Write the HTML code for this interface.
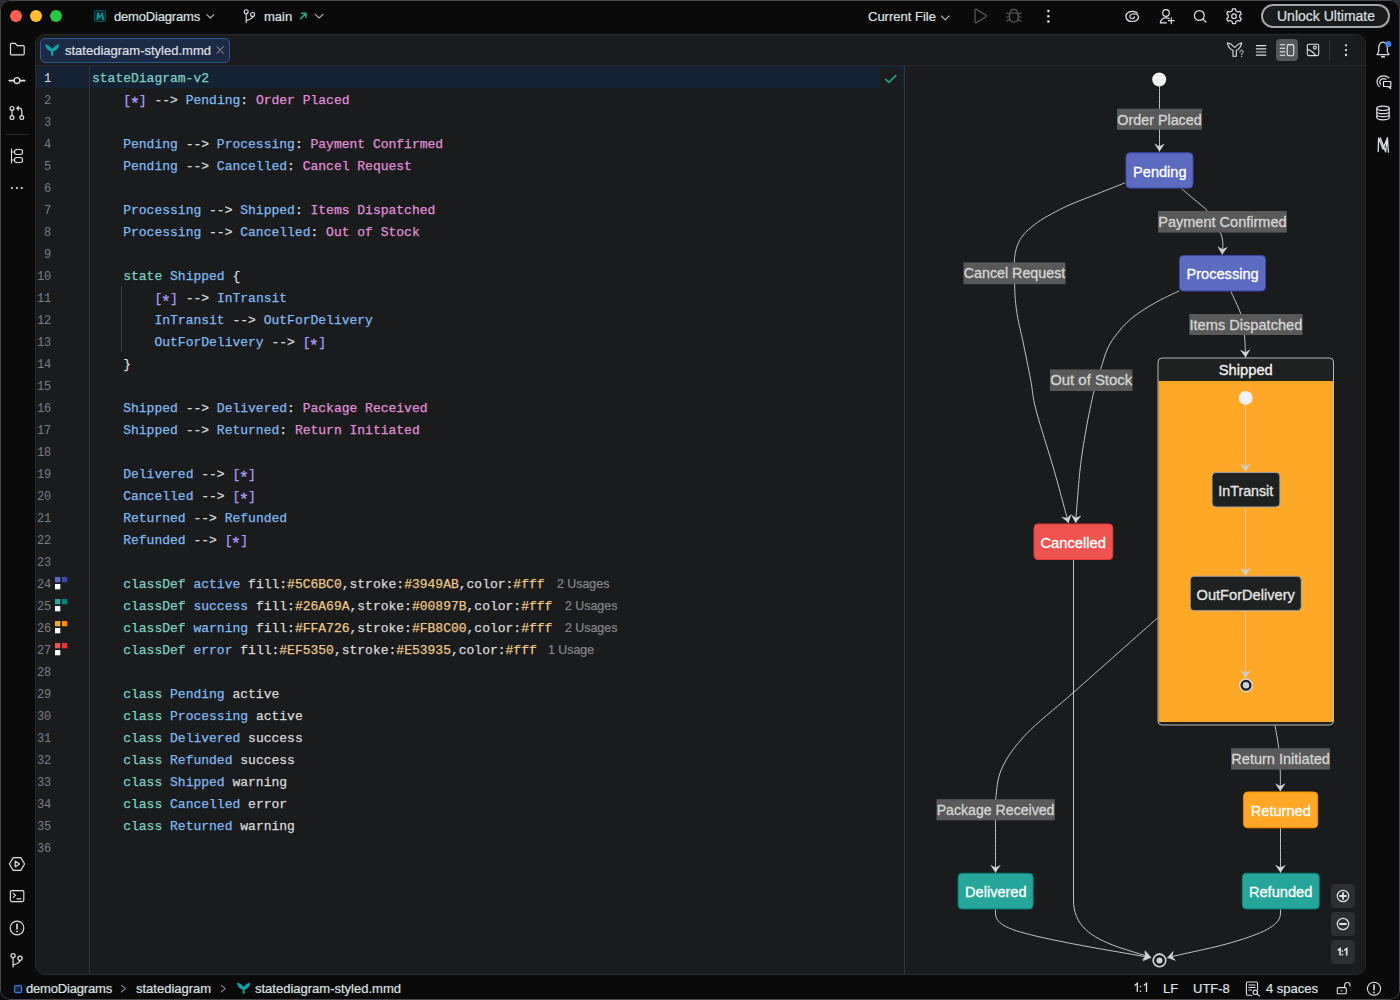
<!DOCTYPE html>
<html><head><meta charset="utf-8">
<style>
*{margin:0;padding:0;box-sizing:border-box}
html,body{width:1400px;height:1000px;overflow:hidden;background:linear-gradient(#2a2d33,#1c1e22 50%,#0a0a0a)}
body{font-family:"Liberation Sans",sans-serif;position:relative}
.win{position:absolute;left:0;top:0;width:1400px;height:1000px;background:#0a0a0a;border-radius:10px;overflow:hidden}
.frame{position:absolute;left:0;top:0;width:1400px;height:1000px;border:1px solid #4a4a4c;border-radius:10px;pointer-events:none}
.abs{position:absolute}
.t{position:absolute;white-space:pre;color:#dfe1e5;font-size:13px;line-height:16px;-webkit-text-stroke:0.2px currentColor}
.panel{position:absolute;left:35px;top:34px;width:1331px;height:941px;background:#1a1b1d;border:1px solid #28292b;border-radius:10px;overflow:hidden}
.code{position:absolute;font-family:"Liberation Mono",monospace;font-size:13px;white-space:pre;line-height:22px;-webkit-text-stroke:0.25px currentColor}
.ln{position:absolute;font-family:"Liberation Mono",monospace;font-size:12px;line-height:22px;color:#7a7e85;text-align:right;width:39.3px}
.k{color:#7fd1c3}.i{color:#80baf3}.s{color:#e08fd9}.p{color:#ae9cfa}.w{color:#d9dadc}.h{color:#ebc688}
.ast{display:inline-block;width:7.8px;text-align:center;transform:translateY(4px) scale(1.3)}
.u{font-family:"Liberation Sans",sans-serif;font-size:12.4px;color:#86888c}
svg{position:absolute;left:0;top:0}
</style></head>
<body>
<div class="win">
  <!-- title bar -->
  <div class="abs" style="left:10px;top:10px;width:12px;height:12px;border-radius:50%;background:#ff5f57"></div>
  <div class="abs" style="left:30px;top:10px;width:12px;height:12px;border-radius:50%;background:#febc2e"></div>
  <div class="abs" style="left:50px;top:10px;width:12px;height:12px;border-radius:50%;background:#28c840"></div>
  <div class="t" style="left:114px;top:9px;font-size:13px;color:#dfe1e5;letter-spacing:-0.18px">demoDiagrams</div>
  <div class="t" style="left:264px;top:9px;font-size:13px;color:#dfe1e5">main</div>
  <div class="t" style="left:868px;top:9px;font-size:13px;color:#dfe1e5">Current File</div>
  <div class="abs" style="left:1261px;top:4px;width:129px;height:24px;border:2px solid #a4a5a8;border-radius:12px;background:#1a1b1d"></div>
  <div class="t" style="left:1277px;top:8px;font-size:14px;color:#dfe1e5">Unlock Ultimate</div>

  <!-- editor panel -->
  <div class="panel">
    <div class="abs" style="left:0;top:30px;width:1331px;height:1px;background:#26272a"></div>
    <!-- tab -->
    <div class="abs" style="left:4px;top:3px;width:190px;height:25px;background:#1d2a45;border:1px solid #2b5896;border-radius:5px"></div>
    <div class="t" style="left:29px;top:8px;font-size:13px;color:#dfe1e5">statediagram-styled.mmd</div>
    <!-- line highlight -->
    <div class="abs" style="left:0;top:31px;width:868px;height:22px;background:#142233"></div>
    <div class="abs" style="left:53px;top:31px;width:1px;height:910px;background:#363637"></div>
    <div class="abs" style="left:868px;top:31px;width:1px;height:910px;background:#38393b"></div>
  </div>

  <div class="abs" style="left:121px;top:286px;width:1px;height:66px;background:#3a3b3e"></div>
  <!-- line numbers -->
  <div class="ln" style="left:12px;top:68px">
<span style="color:#dfe1e5">1</span><br>2<br>3<br>4<br>5<br>6<br>7<br>8<br>9<br>10<br>11<br>12<br>13<br>14<br>15<br>16<br>17<br>18<br>19<br>20<br>21<br>22<br>23<br>24<br>25<br>26<br>27<br>28<br>29<br>30<br>31<br>32<br>33<br>34<br>35<br>36</div>

  <div class="code" style="left:92px;top:68px"><span class="k">stateDiagram-v2</span>
    <span class="p">[<span class="ast">*</span>]</span> <span class="w">--&gt;</span> <span class="i">Pending</span><span class="w">:</span> <span class="s">Order Placed</span>

    <span class="i">Pending</span> <span class="w">--&gt;</span> <span class="i">Processing</span><span class="w">:</span> <span class="s">Payment Confirmed</span>
    <span class="i">Pending</span> <span class="w">--&gt;</span> <span class="i">Cancelled</span><span class="w">:</span> <span class="s">Cancel Request</span>

    <span class="i">Processing</span> <span class="w">--&gt;</span> <span class="i">Shipped</span><span class="w">:</span> <span class="s">Items Dispatched</span>
    <span class="i">Processing</span> <span class="w">--&gt;</span> <span class="i">Cancelled</span><span class="w">:</span> <span class="s">Out of Stock</span>

    <span class="k">state</span> <span class="i">Shipped</span> <span class="w">{</span>
        <span class="p">[<span class="ast">*</span>]</span> <span class="w">--&gt;</span> <span class="i">InTransit</span>
        <span class="i">InTransit</span> <span class="w">--&gt;</span> <span class="i">OutForDelivery</span>
        <span class="i">OutForDelivery</span> <span class="w">--&gt;</span> <span class="p">[<span class="ast">*</span>]</span>
    <span class="w">}</span>

    <span class="i">Shipped</span> <span class="w">--&gt;</span> <span class="i">Delivered</span><span class="w">:</span> <span class="s">Package Received</span>
    <span class="i">Shipped</span> <span class="w">--&gt;</span> <span class="i">Returned</span><span class="w">:</span> <span class="s">Return Initiated</span>

    <span class="i">Delivered</span> <span class="w">--&gt;</span> <span class="p">[<span class="ast">*</span>]</span>
    <span class="i">Cancelled</span> <span class="w">--&gt;</span> <span class="p">[<span class="ast">*</span>]</span>
    <span class="i">Returned</span> <span class="w">--&gt;</span> <span class="i">Refunded</span>
    <span class="i">Refunded</span> <span class="w">--&gt;</span> <span class="p">[<span class="ast">*</span>]</span>

    <span class="k">classDef</span> <span class="i">active</span> <span class="w">fill:</span><span class="h">#5C6BC0</span><span class="w">,stroke:</span><span class="h">#3949AB</span><span class="w">,color:</span><span class="h">#fff</span>
    <span class="k">classDef</span> <span class="i">success</span> <span class="w">fill:</span><span class="h">#26A69A</span><span class="w">,stroke:</span><span class="h">#00897B</span><span class="w">,color:</span><span class="h">#fff</span>
    <span class="k">classDef</span> <span class="i">warning</span> <span class="w">fill:</span><span class="h">#FFA726</span><span class="w">,stroke:</span><span class="h">#FB8C00</span><span class="w">,color:</span><span class="h">#fff</span>
    <span class="k">classDef</span> <span class="i">error</span> <span class="w">fill:</span><span class="h">#EF5350</span><span class="w">,stroke:</span><span class="h">#E53935</span><span class="w">,color:</span><span class="h">#fff</span>

    <span class="k">class</span> <span class="i">Pending</span> <span class="w">active</span>
    <span class="k">class</span> <span class="i">Processing</span> <span class="w">active</span>
    <span class="k">class</span> <span class="i">Delivered</span> <span class="w">success</span>
    <span class="k">class</span> <span class="i">Refunded</span> <span class="w">success</span>
    <span class="k">class</span> <span class="i">Shipped</span> <span class="w">warning</span>
    <span class="k">class</span> <span class="i">Cancelled</span> <span class="w">error</span>
    <span class="k">class</span> <span class="i">Returned</span> <span class="w">warning</span>
</div>
  <div class="t u" style="left:557px;top:576px">2 Usages</div>
  <div class="t u" style="left:565px;top:598px">2 Usages</div>
  <div class="t u" style="left:565px;top:620px">2 Usages</div>
  <div class="t u" style="left:548px;top:642px">1 Usage</div>

  <!-- status bar -->
  <div class="t" style="left:26px;top:981px;color:#dfe1e5;letter-spacing:-0.18px">demoDiagrams</div>
  <div class="t" style="left:136px;top:981px;color:#dfe1e5">statediagram</div>
  <div class="t" style="left:255px;top:981px;color:#dfe1e5">statediagram-styled.mmd</div>
  
  <div class="t" style="left:1163px;top:981px;color:#dfe1e5">LF</div>
  <div class="t" style="left:1193px;top:981px;color:#dfe1e5">UTF-8</div>
  <div class="t" style="left:1266px;top:981px;color:#dfe1e5">4 spaces</div>

  <!-- DIAGRAM -->
<svg width="1400" height="1000" viewBox="0 0 1400 1000" style="font-family:'Liberation Sans',sans-serif"><rect x="1158" y="358" width="175.5" height="367" rx="4" fill="#202121" stroke="#b8b8b8" stroke-width="1"/>
<rect x="1158.5" y="381" width="174.5" height="341" fill="#FFA726"/>
<text x="1245.8" y="375.3" fill="#f2f2f2" stroke="#f2f2f2" stroke-width="0.3" font-size="14.5" text-anchor="middle" textLength="54.0" lengthAdjust="spacingAndGlyphs">Shipped</text>
<path d="M1159.5,86.0 C1159.5,96.9 1159.5,140.6 1159.5,151.5" fill="none" stroke="#d2d2d2" stroke-width="0.9"/>
<path d="M1159.5,151.5 L1154.2,143.5 L1159.5,146.3 L1164.8,143.5 Z" fill="#d2d2d2"/>
<path d="M1181.4,188.6 C1183.5,190.3 1189.4,195.4 1193.7,199.0 C1198.0,202.6 1203.6,206.7 1207.0,210.4 C1210.4,214.1 1211.8,217.3 1214.0,221.0 C1216.2,224.7 1218.8,228.7 1220.3,232.3 C1221.8,235.9 1222.5,239.0 1222.8,242.7 C1223.1,246.4 1222.3,252.5 1222.2,254.5" fill="none" stroke="#d2d2d2" stroke-width="0.9"/>
<path d="M1222.2,254.5 L1217.3,246.2 L1222.5,249.3 L1227.9,246.8 Z" fill="#d2d2d2"/>
<path d="M1124.8,182.9 C1120.3,184.7 1107.0,190.0 1097.9,193.6 C1088.8,197.2 1077.8,201.3 1070.0,204.7 C1062.2,208.1 1056.8,211.1 1051.4,214.0 C1046.0,216.9 1041.8,219.3 1037.5,222.4 C1033.2,225.5 1028.5,229.3 1025.4,232.6 C1022.3,235.8 1020.5,238.8 1018.9,241.9 C1017.3,245.0 1016.5,247.7 1015.7,251.1 C1014.9,254.5 1014.5,256.8 1014.3,262.3 C1014.1,267.8 1014.4,277.7 1014.6,283.9 C1014.8,290.1 1014.8,293.5 1015.3,299.3 C1015.8,305.1 1016.6,311.5 1017.9,318.6 C1019.2,325.7 1020.9,331.5 1023.0,341.7 C1025.1,351.9 1028.5,368.6 1030.7,380.0 C1032.9,391.4 1032.1,395.0 1036.0,410.0 C1039.9,425.0 1048.6,451.2 1054.0,470.0 C1059.4,488.8 1066.1,514.2 1068.5,523.0" fill="none" stroke="#d2d2d2" stroke-width="0.9"/>
<path d="M1068.5,523.0 L1061.3,516.7 L1067.1,518.0 L1071.5,513.9 Z" fill="#d2d2d2"/>
<path d="M1230.8,291.5 C1232.5,295.2 1238.5,306.8 1240.8,314.0 C1243.1,321.2 1243.6,327.6 1244.4,334.9 C1245.2,342.1 1245.4,353.7 1245.6,357.5" fill="none" stroke="#d2d2d2" stroke-width="0.9"/>
<path d="M1245.6,357.5 L1239.9,349.8 L1245.3,352.3 L1250.5,349.2 Z" fill="#d2d2d2"/>
<path d="M1179.2,290.9 C1175.9,292.5 1165.7,297.1 1159.2,300.6 C1152.7,304.1 1145.3,308.5 1140.0,312.1 C1134.7,315.7 1131.0,318.8 1127.1,322.4 C1123.2,326.0 1120.0,329.7 1116.8,334.0 C1113.6,338.3 1110.5,342.3 1107.8,348.1 C1105.1,353.9 1103.1,361.6 1100.8,368.7 C1098.5,375.8 1096.5,380.8 1094.0,391.0 C1091.5,401.2 1088.3,416.8 1086.0,430.0 C1083.7,443.2 1081.7,454.5 1080.0,470.0 C1078.3,485.5 1076.3,514.2 1075.6,523.0" fill="none" stroke="#d2d2d2" stroke-width="0.9"/>
<path d="M1075.6,523.0 L1071.0,514.6 L1076.0,517.8 L1081.5,515.5 Z" fill="#d2d2d2"/>
<path d="M1157.5,618.0 C1143.6,630.3 1095.9,672.6 1074.0,692.0 C1052.1,711.4 1038.0,721.7 1026.0,734.4 C1014.0,747.1 1007.0,757.2 1002.0,768.0 C997.0,778.8 996.8,790.3 995.7,799.0 C994.6,807.7 995.5,807.7 995.5,820.0 C995.5,832.3 995.5,864.0 995.5,872.8" fill="none" stroke="#d2d2d2" stroke-width="0.9"/>
<path d="M995.5,872.8 L990.2,864.8 L995.5,867.6 L1000.8,864.8 Z" fill="#d2d2d2"/>
<path d="M1275.0,725.5 C1275.6,729.3 1277.9,741.1 1278.8,748.4 C1279.7,755.7 1280.0,762.1 1280.2,769.3 C1280.5,776.4 1280.3,787.6 1280.3,791.3" fill="none" stroke="#d2d2d2" stroke-width="0.9"/>
<path d="M1280.3,791.3 L1275.0,783.3 L1280.3,786.1 L1285.6,783.3 Z" fill="#d2d2d2"/>
<path d="M1280.5,828.3 C1280.5,835.7 1280.5,865.4 1280.5,872.8" fill="none" stroke="#d2d2d2" stroke-width="0.9"/>
<path d="M1280.5,872.8 L1275.2,864.8 L1280.5,867.6 L1285.8,864.8 Z" fill="#d2d2d2"/>
<path d="M995.5,909.4 L995.5,913 C995.5,925 1010,930 1040,937 C1080,946 1120,952 1151,957.7" fill="none" stroke="#d2d2d2" stroke-width="0.9"/>
<path d="M1151.0,957.7 L1142.2,961.5 L1145.9,956.8 L1144.1,951.0 Z" fill="#d2d2d2"/>
<path d="M1073.5,560 L1073.5,900 C1073.5,925 1090,937 1118,947 C1130,951 1140,954 1151,957.2" fill="none" stroke="#d2d2d2" stroke-width="0.9"/>
<path d="M1151.0,957.2 L1141.8,960.1 L1146.0,955.7 L1144.8,949.9 Z" fill="#d2d2d2"/>
<path d="M1280.5,909.4 L1280.5,913 C1280.5,925 1265,932 1240,940 C1215,948 1190,952 1167.2,957.7" fill="none" stroke="#d2d2d2" stroke-width="0.9"/>
<path d="M1167.2,957.7 L1173.7,950.6 L1172.2,956.4 L1176.2,960.9 Z" fill="#d2d2d2"/>
<path d="M1245.5,405.0 C1245.5,416.1 1245.5,460.4 1245.5,471.5" fill="none" stroke="#d4d4d4" stroke-width="0.75"/>
<path d="M1245.5,471.5 L1240.2,463.5 L1245.5,466.3 L1250.8,463.5 Z" fill="#cfcfcf"/>
<path d="M1245.5,507.5 C1245.5,518.9 1245.5,564.3 1245.5,575.7" fill="none" stroke="#d4d4d4" stroke-width="0.75"/>
<path d="M1245.5,575.7 L1240.2,567.7 L1245.5,570.5 L1250.8,567.7 Z" fill="#cfcfcf"/>
<path d="M1245.5,611.2 C1245.5,622.3 1245.5,666.9 1245.5,678.0" fill="none" stroke="#d4d4d4" stroke-width="0.75"/>
<path d="M1245.5,678.0 L1240.2,670.0 L1245.5,672.8 L1250.8,670.0 Z" fill="#cfcfcf"/>
<circle cx="1159.2" cy="79.5" r="7" fill="#f2f2f2"/>
<circle cx="1245.7" cy="397.9" r="7" fill="#f2f2f2"/>
<circle cx="1246" cy="685.3" r="6.3" fill="#222" stroke="#d8d8d8" stroke-width="1.5"/>
<circle cx="1246" cy="685.3" r="3.2" fill="#cfcfcf"/>
<circle cx="1159.5" cy="960.4" r="6.3" fill="#1a1b1e" stroke="#d8d8d8" stroke-width="1.6"/>
<circle cx="1159.5" cy="960.4" r="3" fill="#cfcfcf"/>
<rect x="1126.0" y="152.8" width="67.0" height="35.3" rx="4" fill="#5C6BC0" stroke="#3949AB" stroke-width="1"/>
<text x="1159.8" y="176.5" fill="#fff" stroke="#fff" stroke-width="0.3" font-size="14.5" text-anchor="middle" textLength="53.4" lengthAdjust="spacingAndGlyphs">Pending</text>
<rect x="1179.5" y="255.5" width="86.0" height="35.5" rx="4" fill="#5C6BC0" stroke="#3949AB" stroke-width="1"/>
<text x="1222.6" y="279.0" fill="#fff" stroke="#fff" stroke-width="0.3" font-size="14.5" text-anchor="middle" textLength="72.3" lengthAdjust="spacingAndGlyphs">Processing</text>
<rect x="1034.0" y="524.0" width="78.8" height="35.5" rx="4" fill="#EF5350" stroke="#E53935" stroke-width="1"/>
<text x="1073.2" y="548.0" fill="#fff" stroke="#fff" stroke-width="0.3" font-size="14.5" text-anchor="middle" textLength="65.4" lengthAdjust="spacingAndGlyphs">Cancelled</text>
<rect x="1212.0" y="472.4" width="67.9" height="34.6" rx="4" fill="#1f2020" stroke="#a8a8a8" stroke-width="1"/>
<text x="1245.8" y="495.5" fill="#e6e6e6" stroke="#e6e6e6" stroke-width="0.3" font-size="14.5" text-anchor="middle" textLength="54.9" lengthAdjust="spacingAndGlyphs">InTransit</text>
<rect x="1190.2" y="576.2" width="111.1" height="34.5" rx="4" fill="#1f2020" stroke="#a8a8a8" stroke-width="1"/>
<text x="1245.7" y="600.0" fill="#e6e6e6" stroke="#e6e6e6" stroke-width="0.3" font-size="14.5" text-anchor="middle" textLength="98.4" lengthAdjust="spacingAndGlyphs">OutForDelivery</text>
<rect x="1243.6" y="792.0" width="74.1" height="35.8" rx="4" fill="#FFA726" stroke="#FB8C00" stroke-width="1"/>
<text x="1280.8" y="816.0" fill="#fff" stroke="#fff" stroke-width="0.3" font-size="14.5" text-anchor="middle" textLength="59.9" lengthAdjust="spacingAndGlyphs">Returned</text>
<rect x="958.1" y="873.3" width="75.0" height="35.6" rx="4" fill="#26A69A" stroke="#00897B" stroke-width="1"/>
<text x="995.8" y="897.0" fill="#fff" stroke="#fff" stroke-width="0.3" font-size="14.5" text-anchor="middle" textLength="61.5" lengthAdjust="spacingAndGlyphs">Delivered</text>
<rect x="1242.3" y="873.3" width="76.9" height="35.6" rx="4" fill="#26A69A" stroke="#00897B" stroke-width="1"/>
<text x="1280.6" y="897.0" fill="#fff" stroke="#fff" stroke-width="0.3" font-size="14.5" text-anchor="middle" textLength="63.4" lengthAdjust="spacingAndGlyphs">Refunded</text>
<rect x="1117.0" y="108.7" width="85.0" height="21.1" fill="#595959"/><text x="1159.5" y="124.7" fill="#d6d6d6" stroke="#d6d6d6" stroke-width="0.3" font-size="14.5" text-anchor="middle" textLength="84.5" lengthAdjust="spacingAndGlyphs">Order Placed</text>
<rect x="1158.0" y="211.0" width="128.8" height="21.6" fill="#595959"/><text x="1222.4" y="227.0" fill="#d6d6d6" stroke="#d6d6d6" stroke-width="0.3" font-size="14.5" text-anchor="middle" textLength="128.3" lengthAdjust="spacingAndGlyphs">Payment Confirmed</text>
<rect x="963.4" y="262.4" width="102.1" height="21.8" fill="#595959"/><text x="1014.5" y="278.4" fill="#d6d6d6" stroke="#d6d6d6" stroke-width="0.3" font-size="14.5" text-anchor="middle" textLength="101.6" lengthAdjust="spacingAndGlyphs">Cancel Request</text>
<rect x="1189.3" y="314.0" width="113.3" height="21.0" fill="#595959"/><text x="1245.9" y="330.0" fill="#d6d6d6" stroke="#d6d6d6" stroke-width="0.3" font-size="14.5" text-anchor="middle" textLength="112.8" lengthAdjust="spacingAndGlyphs">Items Dispatched</text>
<rect x="1050.0" y="369.4" width="82.4" height="21.6" fill="#595959"/><text x="1091.2" y="385.4" fill="#d6d6d6" stroke="#d6d6d6" stroke-width="0.3" font-size="14.5" text-anchor="middle" textLength="81.9" lengthAdjust="spacingAndGlyphs">Out of Stock</text>
<rect x="936.5" y="799.2" width="118.3" height="21.1" fill="#595959"/><text x="995.6" y="815.2" fill="#d6d6d6" stroke="#d6d6d6" stroke-width="0.3" font-size="14.5" text-anchor="middle" textLength="117.8" lengthAdjust="spacingAndGlyphs">Package Received</text>
<rect x="1231.1" y="748.2" width="99.0" height="21.4" fill="#595959"/><text x="1280.6" y="764.2" fill="#d6d6d6" stroke="#d6d6d6" stroke-width="0.3" font-size="14.5" text-anchor="middle" textLength="98.5" lengthAdjust="spacingAndGlyphs">Return Initiated</text></svg>
<!-- /DIAGRAM -->
<!-- ICONS -->
<svg width="1400" height="1000" viewBox="0 0 1400 1000" fill="none" stroke-linecap="round" stroke-linejoin="round">
<!-- ===== title bar ===== -->
<rect x="94.5" y="10.5" width="11" height="11" rx="0.8" fill="#05282b" stroke="#0b5154" stroke-width="1"/>
<path d="M96.4,19.8 L97.2,12.6 L98.6,12.6 L100.2,16.2 L102.4,11.8 L104.4,20.2 L102.6,20.2 L101.6,15.6 L99.6,19 L98.8,16.5 L98.2,19.8 Z" fill="#0a9ca4"/>
<path d="M206.8,14.6 L210.3,18 L213.8,14.6" stroke="#b4b6ba" stroke-width="1.1"/>
<circle cx="246.2" cy="11.8" r="2" stroke="#dfe1e5" stroke-width="1.1"/>
<circle cx="252.6" cy="14.5" r="2" stroke="#dfe1e5" stroke-width="1.1"/>
<path d="M246.2,13.8 V22.5 M252.6,16.5 C252.6,19 249,19.5 246.4,20.5" stroke="#dfe1e5" stroke-width="1.1"/>
<path d="M300.6,18.6 L306,13.2 M301.6,13.2 H306 V17.6" stroke="#27ad7d" stroke-width="1.5"/>
<path d="M315.2,14.4 L319.1,18 L323,14.4" stroke="#b4b6ba" stroke-width="1.1"/>
<path d="M941.4,16 L945.2,19.8 L949,16" stroke="#b4b6ba" stroke-width="1.1"/>
<path d="M975,10 C975,9.3 975.6,9 976.2,9.3 L986,15.2 C986.6,15.6 986.6,16.4 986,16.8 L976.2,22.7 C975.6,23 975,22.7 975,22 Z" stroke="#5b5c5f" stroke-width="1.2"/>
<g stroke="#5b5c5f" stroke-width="1.2">
<path d="M1010.5,12.5 C1010.5,10.5 1011.8,9.4 1013.9,9.4 C1016,9.4 1017.3,10.5 1017.3,12.5"/>
<path d="M1009.6,13 H1018.2 V17.5 C1018.2,20 1016.5,22 1013.9,22 C1011.3,22 1009.6,20 1009.6,17.5 Z"/>
<path d="M1006.8,13 L1009.6,14.5 M1021,13 L1018.2,14.5 M1006.6,17 H1009.6 M1021.2,17 H1018.2 M1006.8,21 L1009.8,19.5 M1021,21 L1018,19.5"/>
</g>
<circle cx="1048.4" cy="11" r="1.25" fill="#dfe1e5"/><circle cx="1048.4" cy="16.2" r="1.25" fill="#dfe1e5"/><circle cx="1048.4" cy="21.4" r="1.25" fill="#dfe1e5"/>
<!-- spiral -->
<path d="M1137.5,13.2 C1135,10.8 1129.5,10.8 1127,13.5 C1124.5,16.5 1126.5,21.5 1132,21.5 C1136.5,21.5 1139,19 1138.5,16.5 C1138,14.5 1135,13.5 1132.3,14 C1129.5,14.6 1129,17.3 1131,18.3 C1132.5,19 1134.3,18.2 1134.5,16.8" stroke="#dfe1e5" stroke-width="1.2"/>
<!-- person+ -->
<circle cx="1166" cy="13" r="3.3" stroke="#dfe1e5" stroke-width="1.2"/>
<path d="M1160.3,22.8 C1160.8,19.5 1163,17.8 1166,17.8 C1167.3,17.8 1168.4,18.1 1169.3,18.7 M1160.3,22.8 H1166.5 M1171.3,17.8 V23.6 M1168.4,20.7 H1174.2" stroke="#dfe1e5" stroke-width="1.2"/>
<!-- search -->
<circle cx="1199.3" cy="15.5" r="4.9" stroke="#dfe1e5" stroke-width="1.2"/>
<path d="M1202.9,19.1 L1206,22" stroke="#dfe1e5" stroke-width="1.2"/>
<!-- gear -->
<path d="M1232.6,9.6 H1235.4 L1236,11.8 L1237.8,12.8 L1240,12.2 L1241.3,14.6 L1239.7,16.1 V18 L1241.3,19.5 L1240,21.9 L1237.8,21.3 L1236,22.3 L1235.4,24.5 H1232.6 L1232,22.3 L1230.2,21.3 L1228,21.9 L1226.7,19.5 L1228.3,18 V16.1 L1226.7,14.6 L1228,12.2 L1230.2,12.8 L1232,11.8 Z" transform="translate(0,-0.8)" stroke="#dfe1e5" stroke-width="1.2"/>
<circle cx="1234" cy="16.2" r="2.3" stroke="#dfe1e5" stroke-width="1.2"/>
<!-- ===== left sidebar ===== -->
<g stroke="#dfe1e5" stroke-width="1.2">
<path d="M10.5,44.5 C10.5,43.8 10.9,43.4 11.5,43.4 H15.2 L17.3,45.6 H23.2 C23.8,45.6 24.2,46 24.2,46.6 V53.8 C24.2,54.4 23.8,54.8 23.2,54.8 H11.5 C10.9,54.8 10.5,54.4 10.5,53.8 Z"/>
<path d="M9.2,80.6 H14 M20,80.6 H24.8" stroke-width="1.6"/>
<circle cx="17" cy="80.6" r="2.9" stroke-width="1.3"/>
<circle cx="12" cy="108.4" r="1.9"/><circle cx="12" cy="117.6" r="1.9"/><circle cx="21.8" cy="117.6" r="1.9"/>
<path d="M12,110.3 V115.7 M21.8,115.7 V111 C21.8,109.5 20.8,108.2 19,108.2 H17 M18.6,106.3 L16.7,108.2 L18.6,110.1"/>
<path d="M5,134.5 H29" stroke="#2a2b2d" stroke-width="1"/>
<path d="M11.5,149 V163 M11.5,152 H14.5 M11.5,160 H14.5" stroke-width="1.1"/>
<rect x="14.5" y="149.5" width="8" height="5" rx="2.2" stroke-width="1.1"/>
<rect x="14.5" y="157.5" width="8" height="5" rx="2.2" stroke-width="1.1"/>
<path d="M9.4,864 L13.2,857.6 H20.8 L24.6,864 L20.8,870.4 H13.2 Z" stroke-linejoin="round"/>
<path d="M15.2,861.2 L19.6,864 L15.2,866.8 Z"/>
<rect x="10.4" y="890.6" width="13.4" height="11" rx="1.5"/>
<path d="M13.2,893.4 L15.6,895.4 L13.2,897.4 M17,898.8 H20.8"/>
<circle cx="17" cy="928" r="6.8"/>
<path d="M17,924.3 V929" stroke-width="1.6"/>
<circle cx="17" cy="931.6" r="0.9" fill="#dfe1e5" stroke="none"/>
<circle cx="13.1" cy="955.6" r="2.1"/><circle cx="20" cy="958.3" r="2.1"/>
<path d="M13.1,957.7 V967 M20,960.4 C20,962.8 17,963.6 13.3,965"/>
</g>
<circle cx="11.9" cy="188" r="1.1" fill="#dfe1e5"/><circle cx="16.9" cy="188" r="1.1" fill="#dfe1e5"/><circle cx="21.8" cy="188" r="1.1" fill="#dfe1e5"/>
<!-- ===== right sidebar ===== -->
<g stroke="#dfe1e5" stroke-width="1.2">
<path d="M1377,54.6 H1389 L1387.3,51.8 V48 C1387.3,44.8 1385.4,42.2 1383,42.2 C1380.6,42.2 1378.7,44.8 1378.7,48 V51.8 Z"/>
<path d="M1381.6,56.8 H1384.4" stroke-width="1.4"/>
<path d="M1379.2,86.5 C1376.8,84.5 1376.2,80.5 1378.5,78 C1381,75.3 1386,75.3 1388.8,77.8 M1380.6,84.4 C1379.3,82.8 1379.5,80.7 1381,79.6 C1382.5,78.5 1384.5,78.5 1386,79.3 M1383.5,81.5 H1390.8 V86.5 H1389.8 L1390.8,88.6 L1387.8,86.5 H1383.5 Z"/>
<ellipse cx="1383" cy="108.3" rx="6.2" ry="2.2"/>
<path d="M1376.8,108.3 V117.6 C1376.8,118.8 1379.6,119.8 1383,119.8 C1386.4,119.8 1389.2,118.8 1389.2,117.6 V108.3 M1376.8,111.4 C1376.8,112.6 1379.6,113.6 1383,113.6 C1386.4,113.6 1389.2,112.6 1389.2,111.4 M1376.8,114.5 C1376.8,115.7 1379.6,116.7 1383,116.7 C1386.4,116.7 1389.2,115.7 1389.2,114.5"/>
<path d="M1378.2,151.5 L1378.6,138 L1383,149 L1387.4,138 L1388.4,152.2 M1380.4,138 L1385.6,151.8 M1385.6,151.8 L1387.4,138" stroke-width="1.3"/>
</g>
<circle cx="1388.4" cy="44.1" r="3" fill="#3f7ff2"/>
<!-- ===== tab ===== -->
<path d="M45,44.2 C45.8,48.5 48.3,50.6 51.1,51.3 V55.7 H53.3 V51.3 C56.1,50.6 58.6,48.5 59.4,44.2 C56.8,44.7 54.1,46.4 52.2,48.9 C50.3,46.4 47.6,44.7 45,44.2 Z" fill="#10a2a9"/>
<path d="M217,46.6 L223.4,53.4 M223.4,46.6 L217,53.4" stroke="#7b7e84" stroke-width="1.1"/>
<!-- ===== preview toolbar ===== -->
<g stroke="#dfe1e5" stroke-width="1.1">
<path d="M1227.3,42.8 C1228.2,47.2 1230.6,49.5 1233,50.3 V56.3 H1236.3 V50.3 C1238.4,49.6 1240.7,47.3 1241.7,42.8 C1239.2,43.4 1236.8,45 1234.7,47.5 C1232.6,45 1230,43.3 1227.3,42.8 Z"/>
<path d="M1239.9,51.9 C1239.9,50.8 1240.6,50.2 1241.5,50.2 C1242.4,50.2 1243.1,50.8 1243.1,51.7 C1243.1,52.8 1241.6,53.1 1241.6,54.5" stroke-width="1"/><circle cx="1241.6" cy="56.4" r="0.6" fill="#dfe1e5" stroke="none"/>
<path d="M1256.4,45.6 H1265.8 M1256.4,48.8 H1265.8 M1256.4,52 H1265.8 M1256.4,55.2 H1265.8" stroke-width="1.2"/>
</g>
<rect x="1276" y="39" width="22" height="22" rx="4" fill="#56575a"/>
<g stroke="#eeeeee" stroke-width="1.1">
<path d="M1280.2,44.8 H1284.8 M1280.2,48.3 H1284.8 M1280.2,51.8 H1284.8 M1280.2,55.3 H1284.8"/>
<rect x="1287.2" y="44.6" width="6.6" height="11.1" rx="1.6"/>
</g>
<g stroke="#dfe1e5" stroke-width="1.1">
<rect x="1307.3" y="44.2" width="11.4" height="11.4" rx="1.5"/>
<circle cx="1314.9" cy="47.6" r="1.5"/>
<path d="M1307.6,49.6 C1310,49.6 1312,51.5 1313.5,53 L1315.8,55.4"/>
</g>
<path d="M1329.5,40.5 V60" stroke="#333436" stroke-width="1"/>
<circle cx="1346" cy="45.3" r="1.15" fill="#dfe1e5"/><circle cx="1346" cy="50.1" r="1.15" fill="#dfe1e5"/><circle cx="1346" cy="55" r="1.15" fill="#dfe1e5"/>
<!-- swatches -->
<rect x="55" y="577" width="5.3" height="5.3" fill="#5C6BC0"/><rect x="62" y="577" width="5.3" height="5.3" fill="#3949AB"/><rect x="55" y="584" width="5.3" height="5.3" fill="#ffffff"/>
<rect x="55" y="599" width="5.3" height="5.3" fill="#26A69A"/><rect x="62" y="599" width="5.3" height="5.3" fill="#00897B"/><rect x="55" y="606" width="5.3" height="5.3" fill="#ffffff"/>
<rect x="55" y="621" width="5.3" height="5.3" fill="#FFA726"/><rect x="62" y="621" width="5.3" height="5.3" fill="#FB8C00"/><rect x="55" y="628" width="5.3" height="5.3" fill="#ffffff"/>
<rect x="55" y="643" width="5.3" height="5.3" fill="#EF5350"/><rect x="62" y="643" width="5.3" height="5.3" fill="#E53935"/><rect x="55" y="650" width="5.3" height="5.3" fill="#ffffff"/>
<!-- check -->
<rect x="880" y="68" width="22" height="22" rx="5" fill="#1b1c1f"/>
<path d="M885.6,79.3 L888.9,82.4 L895.7,75.6" stroke="#1fa57a" stroke-width="1.7"/>
<!-- zoom buttons -->
<rect x="1331" y="884" width="24" height="24" rx="4" fill="#2d2e31"/>
<rect x="1331" y="912" width="24" height="24" rx="4" fill="#2d2e31"/>
<rect x="1331" y="940" width="24" height="24" rx="4" fill="#2d2e31"/>
<g stroke="#dfe1e5" stroke-width="1.2">
<circle cx="1343" cy="896" r="5.7"/><path d="M1340,896 H1346 M1343,893 V899" stroke-width="1.8"/>
<circle cx="1343" cy="924" r="5.7"/><path d="M1340,924 H1346" stroke-width="1.8"/>
</g>
<path d="M1337.7,950.3 L1340.1,948.6 V955.4 M1344.3,950.3 L1346.7,948.6 V955.4" stroke="#e6e6e6" stroke-width="1.6" stroke-linecap="butt" stroke-linejoin="miter"/>
<circle cx="1342.4" cy="951" r="0.85" fill="#e6e6e6"/><circle cx="1342.4" cy="954.6" r="0.85" fill="#e6e6e6"/>
<!-- ===== status bar ===== -->
<path d="M1134.6,985.4 L1137.3,983.3 V991.9 M1143.8,985.4 L1146.5,983.3 V991.9" stroke="#dfe1e5" stroke-width="1.3" stroke-linecap="butt" stroke-linejoin="miter"/>
<circle cx="1140.5" cy="986.5" r="0.8" fill="#dfe1e5"/><circle cx="1140.5" cy="991.2" r="0.8" fill="#dfe1e5"/>
<rect x="14.6" y="985.6" width="7" height="7" rx="1.6" fill="#1c2640" stroke="#3b7bf0" stroke-width="1.2"/>
<path d="M121.5,985.4 L125.6,988.6 L121.5,991.8 M221.3,985.4 L225.4,988.6 L221.3,991.8" stroke="#8c8f94" stroke-width="1.1"/>
<path d="M236.8,982.5 C237.6,986.8 240.1,988.9 242.7,989.6 V993.7 H244.7 V989.6 C247.3,988.9 249.7,986.8 250.4,982.5 C247.9,983 245.4,984.6 243.7,987 C242,984.6 239.4,983 236.8,982.5 Z" fill="#10a2a9"/>
<g stroke="#dfe1e5" stroke-width="1.1">
<path d="M1257.5,989.5 V983.2 C1257.5,982.5 1257,982 1256.3,982 H1247.6 C1246.9,982 1246.4,982.5 1246.4,983.2 V994 C1246.4,994.7 1246.9,995.2 1247.6,995.2 H1252"/>
<path d="M1248.8,985 H1255 M1248.8,987.5 H1255 M1248.8,990 H1251.5"/>
<circle cx="1255.3" cy="992.3" r="2.2"/><path d="M1256.9,993.9 L1259.5,996"/>
<rect x="1337.3" y="987.6" width="9" height="6.2" rx="1"/>
<path d="M1344.6,987.6 V985.3 C1344.6,983.5 1345.8,982.5 1347.3,982.5 C1348.8,982.5 1350,983.5 1350,985.3 V986"/>
<circle cx="1374" cy="988.8" r="6.6"/>
<path d="M1374,985 V989.8" stroke-width="1.6"/>
</g>
<rect x="1340.7" y="989.8" width="1.8" height="1.8" fill="#8c8c8c"/>
<circle cx="1374" cy="992.4" r="0.9" fill="#dfe1e5"/>
</svg>

<!-- /ICONS -->
<div class="frame"></div>
</div>
</body></html>
